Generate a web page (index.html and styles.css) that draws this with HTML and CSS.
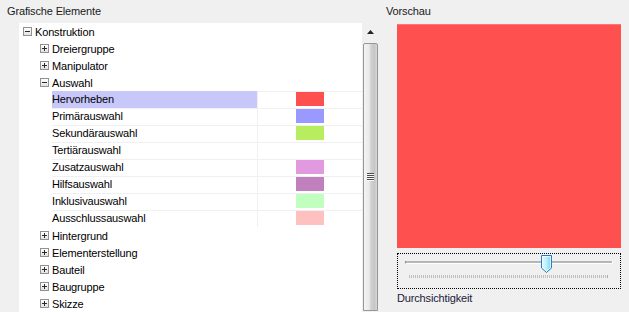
FILE: index.html
```html
<!DOCTYPE html>
<html>
<head>
<meta charset="utf-8">
<link rel="stylesheet" href="styles.css">
</head>
<body>
<div class="app">
  <div class="left">
    <div class="hdr">Grafische Elemente</div>
    <div class="tree-panel">
      <div class="tree">
        <div class="row l1"><span class="exp minus"></span><span class="lbl">Konstruktion</span></div>
        <div class="row l2"><span class="exp plus"></span><span class="lbl">Dreiergruppe</span></div>
        <div class="row l2"><span class="exp plus"></span><span class="lbl">Manipulator</span></div>
        <div class="row l2"><span class="exp minus"></span><span class="lbl">Auswahl</span></div>
        <div class="details">
          <div class="drow sel"><div class="name">Hervorheben</div><div class="val"><span class="sw c1"></span></div></div>
          <div class="drow"><div class="name">Primärauswahl</div><div class="val"><span class="sw c2"></span></div></div>
          <div class="drow"><div class="name">Sekundärauswahl</div><div class="val"><span class="sw c3"></span></div></div>
          <div class="drow"><div class="name">Tertiärauswahl</div><div class="val"></div></div>
          <div class="drow"><div class="name">Zusatzauswahl</div><div class="val"><span class="sw c5"></span></div></div>
          <div class="drow"><div class="name">Hilfsauswahl</div><div class="val"><span class="sw c6"></span></div></div>
          <div class="drow"><div class="name">Inklusivauswahl</div><div class="val"><span class="sw c7"></span></div></div>
          <div class="drow last"><div class="name">Ausschlussauswahl</div><div class="val"><span class="sw c8"></span></div></div>
        </div>
        <div class="row l2"><span class="exp plus"></span><span class="lbl">Hintergrund</span></div>
        <div class="row l2"><span class="exp plus"></span><span class="lbl">Elementerstellung</span></div>
        <div class="row l2"><span class="exp plus"></span><span class="lbl">Bauteil</span></div>
        <div class="row l2"><span class="exp plus"></span><span class="lbl">Baugruppe</span></div>
        <div class="row l2"><span class="exp plus"></span><span class="lbl">Skizze</span></div>
      </div>
      <div class="vscroll">
        <div class="sb-up">
          <svg width="7" height="4" viewBox="0 0 7 4"><path d="M3.5 0 L7 4 L0 4 Z" fill="#222"/></svg>
        </div>
        <div class="sb-thumb"><div class="grip"></div></div>
      </div>
    </div>
  </div>
  <div class="right">
    <div class="hdr2">Vorschau</div>
    <div class="preview"></div>
    <div class="slider">
      <div class="track"></div>
      <div class="ticks"></div>
      <svg class="thumb" width="11" height="18" viewBox="0 0 11 18">
        <defs>
          <linearGradient id="tg" x1="0" y1="0" x2="1" y2="0">
            <stop offset="0" stop-color="#e8fbff"/>
            <stop offset="0.5" stop-color="#bdeefc"/>
            <stop offset="1" stop-color="#6fd0f2"/>
          </linearGradient>
        </defs>
        <path d="M0.5 0.5 H10.5 V13 L5.5 17.5 L0.5 13 Z" fill="url(#tg)" stroke="#2c7cbf"/>
        <path d="M1.5 1.5 H9.5 V12.6 L5.5 16.2 L1.5 12.6 Z" fill="none" stroke="#f2fdff" stroke-opacity="0.8"/>
      </svg>
    </div>
    <div class="caption">Durchsichtigkeit</div>
  </div>
</div>
</body>
</html>
```

FILE: styles.css
```css
* { box-sizing: border-box; }
html, body { margin: 0; padding: 0; }
body {
  background: #f0f0f0;
  font-family: "Liberation Sans", Arial, sans-serif;
  font-size: 11px;
  letter-spacing: -0.15px;
  color: #000;
  width: 629px;
  height: 312px;
  overflow: hidden;
}
.app { display: flex; height: 312px; }
.left { width: 378px; display: flex; flex-direction: column; }
.hdr { height: 23px; line-height: 23px; padding-left: 7px; color: #1a1a1a; }
.tree-panel {
  margin-left: 19px;
  width: 359px;
  height: 289px;
  display: flex;
  overflow: hidden;
}
.tree { width: 343px; background: #fff; }
.row { height: 17px; display: flex; align-items: center; white-space: nowrap; }
.row.l1 { padding-left: 4px; }
.row.l2 { padding-left: 21px; }
.row .lbl { margin-left: 3px; }
.exp {
  position: relative;
  width: 9px; height: 9px;
  border: 1px solid #919191;
  background: linear-gradient(#ffffff, #e2e2e2);
  flex: none;
}
.exp::before {
  content: "";
  position: absolute;
  left: 1px; top: 3px;
  width: 5px; height: 1px;
  background: #2a2a2a;
}
.exp.plus::after {
  content: "";
  position: absolute;
  left: 3px; top: 1px;
  width: 1px; height: 5px;
  background: #2a2a2a;
}
.details { margin-left: 33px; }
.drow { display: flex; height: 17px; border-top: 1px solid #f0f0f0; }
.drow .name { width: 205px; display: flex; align-items: center; white-space: nowrap; padding-bottom: 2px; }
.drow.sel .name { background: #c7c7f9; margin-top: -1px; height: 17px; padding-bottom: 1px; }
.drow .val { flex: 1; border-left: 1px solid #f0f0f0; padding-left: 38px; }
.sw { display: block; width: 28px; height: 14px; }
.c1 { background: #ff5050; }
.c2 { background: #9999ff; }
.c3 { background: #b9ed60; }
.c5 { background: #e199e0; }
.c6 { background: #c080be; }
.c7 { background: #c0ffc0; }
.c8 { background: #ffc0c0; }

.vscroll { width: 16px; background: #f0f0f0; display: flex; flex-direction: column; }
.sb-up { height: 19px; display: flex; align-items: center; justify-content: center; padding-left: 1px; padding-bottom: 1px; }
.sb-up svg { display: block; }
.sb-thumb {
  margin-left: 1px;
  margin-top: 1px;
  width: 15px;
  height: 268px;
  border: 1px solid #979797;
  border-radius: 2px 2px 0 0;
  background: linear-gradient(to right, #f4f4f4 0%, #e9e9e9 40%, #d2d2d2 52%, #c6c6c6 80%, #d8d8d8 100%);
  display: flex;
  align-items: center;
  justify-content: center;
}
.grip {
  width: 7px; height: 8px;
  background: repeating-linear-gradient(#4a4a4a 0, #4a4a4a 1px, #f8f8f8 1px, #f8f8f8 2px);
}

.right { flex: 1; display: flex; flex-direction: column; }
.hdr2 { height: 24px; line-height: 23px; padding-left: 8px; color: #1a1a1a; }
.preview {
  margin-left: 19px;
  width: 224px; height: 224px;
  background: #ff5050;
  border-top: 1px solid #ff7474;
}
.slider {
  position: relative;
  margin-left: 19px;
  margin-top: 5px;
  width: 224px; height: 36px;
  border: 1px dotted #000;
}
.track {
  margin-left: 7px;
  margin-top: 7px;
  width: 208px;
  height: 3px;
  background: #b3b7b7;
  border-bottom: 1px solid #fff;
  border-right: 1px solid #fff;
  border-left: 1px solid #8e9292;
}
.ticks {
  margin-left: 11px;
  margin-top: 11px;
  width: 199px;
  height: 3px;
  background: repeating-linear-gradient(to right, #c0c0c0 0, #c0c0c0 1px, transparent 1px, transparent 2px);
  border-right: 1px solid #a8a8a8;
}
.thumb { position: absolute; left: 143px; top: 1px; display: block; }
.caption { margin-left: 19px; height: 17px; line-height: 16px; padding-top: 1px; color: #1a1a3a; }
```
